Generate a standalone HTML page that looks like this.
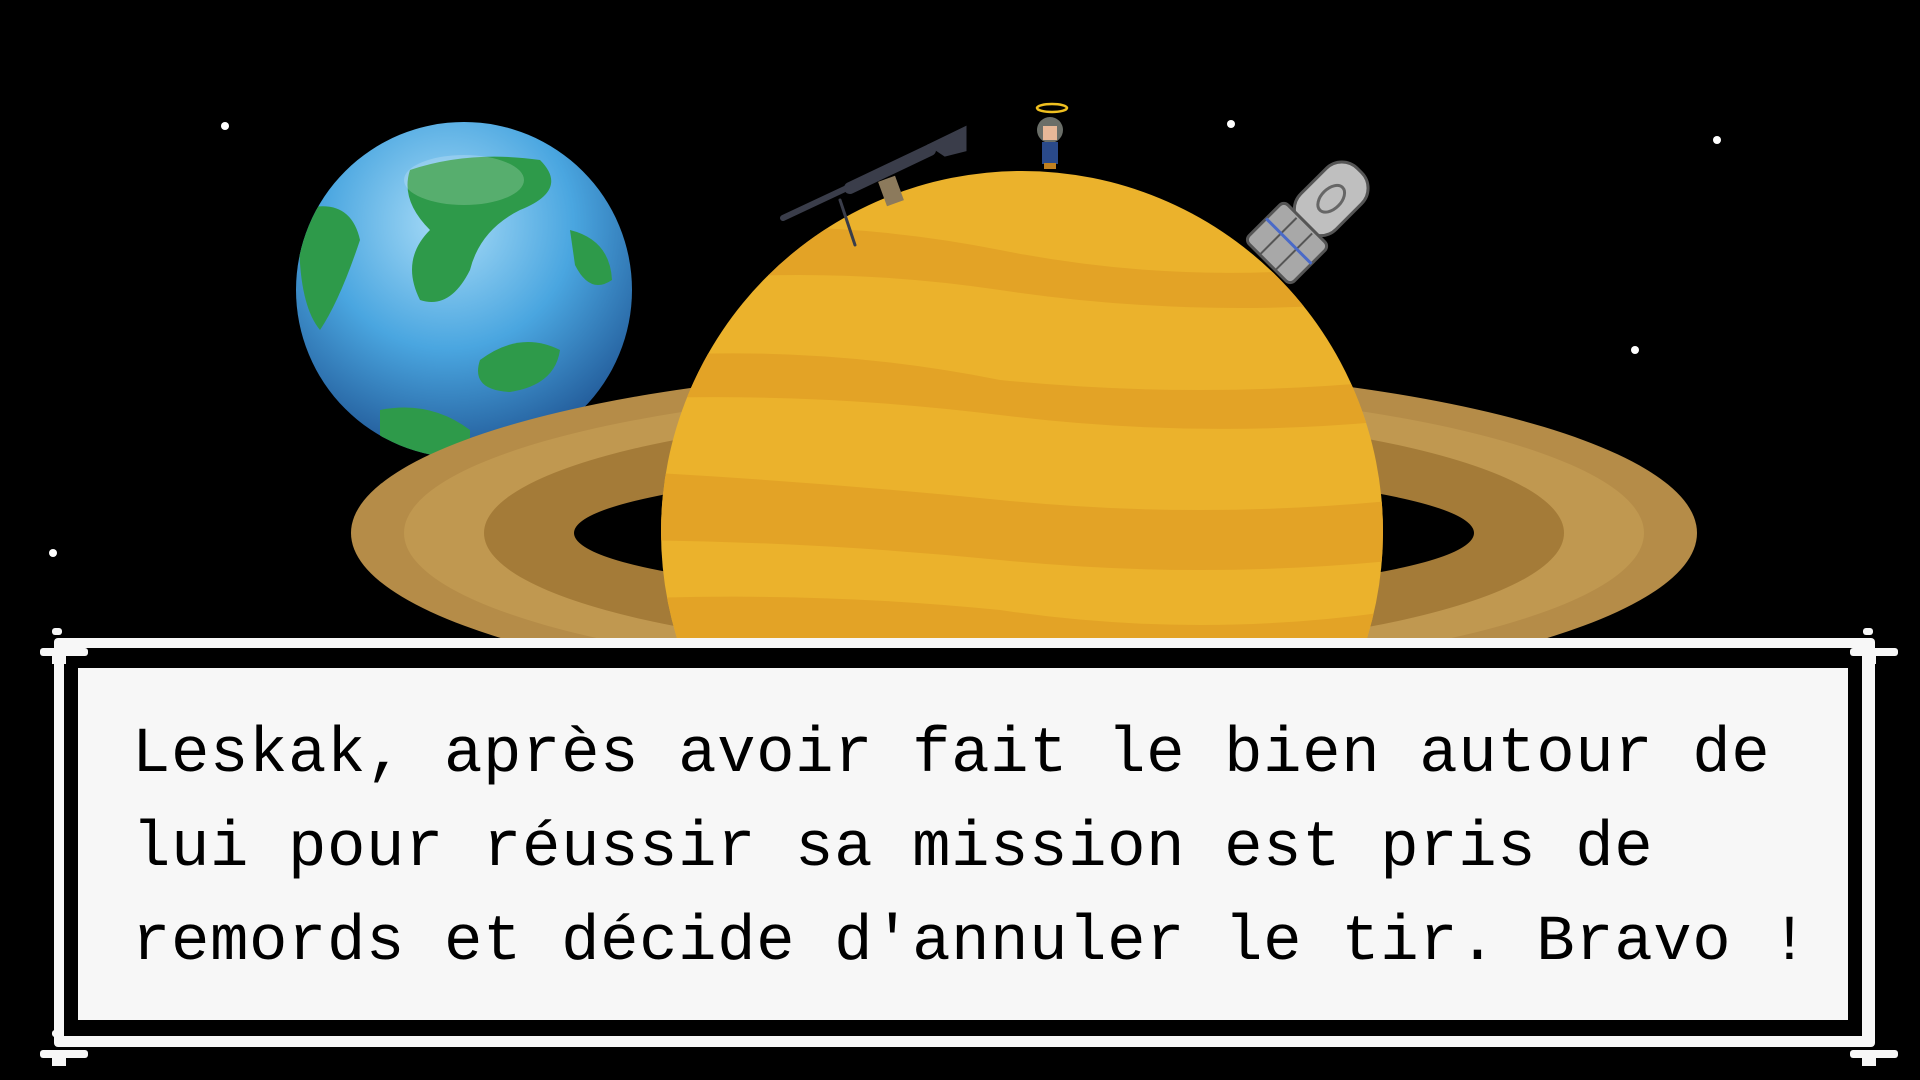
<!DOCTYPE html>
<html><head><meta charset="utf-8"><style>
html,body{margin:0;padding:0;background:#000;width:1920px;height:1080px;overflow:hidden;position:relative}
svg{position:absolute;left:0;top:0}
.f1{position:absolute;left:54px;top:638px;width:1821px;height:409px;background:#f7f7f7;border-radius:4px}
.f2{position:absolute;left:64px;top:648px;width:1798px;height:388px;background:#000}
.f3{position:absolute;left:78px;top:668px;width:1770px;height:352px;background:#f7f7f7}
.t{position:absolute;left:132px;top:708px;font-family:"Liberation Mono",monospace;font-size:64px;line-height:94px;color:#000;white-space:pre;letter-spacing:0.6px}
.orn{position:absolute;background:#f7f7f7}
</style></head><body>
<svg width="1920" height="1080" viewBox="0 0 1920 1080">
<defs>
<radialGradient id="eg" cx="0.45" cy="0.3" r="0.75">
<stop offset="0" stop-color="#a9dcf7"/><stop offset="0.5" stop-color="#4aa6e0"/><stop offset="1" stop-color="#1c4f8e"/></radialGradient>
<clipPath id="sc"><circle cx="1022" cy="532" r="361"/></clipPath>
<clipPath id="ec"><circle cx="464" cy="290" r="168"/></clipPath>
</defs>
<g fill="#fff"><circle cx="225" cy="126" r="4"/><circle cx="1231" cy="124" r="4"/><circle cx="1717" cy="140" r="4"/><circle cx="1635" cy="350" r="4"/><circle cx="53" cy="553" r="4"/></g>
<circle cx="464" cy="290" r="168" fill="url(#eg)"/>
<g clip-path="url(#ec)" fill="#2e9a4a">
<path d="M410 170 Q470 150 540 160 Q570 190 520 210 Q480 230 470 270 Q450 310 420 300 Q400 260 430 230 Q400 200 410 170Z"/>
<path d="M300 210 Q350 195 360 240 Q340 300 320 330 Q295 300 300 210Z"/>
<path d="M570 230 Q610 240 612 280 Q590 295 575 265Z"/>
<path d="M480 360 Q520 330 560 350 Q555 385 510 392 Q470 390 480 360Z"/>
<path d="M380 410 Q430 400 470 430 L470 470 L380 470Z"/>
</g>
<ellipse cx="464" cy="180" rx="60" ry="25" fill="#fff" opacity="0.2"/>
<ellipse cx="1024" cy="533" rx="673" ry="167" fill="#b58c48"/>
<ellipse cx="1024" cy="533" rx="620" ry="145" fill="#c09850"/>
<ellipse cx="1024" cy="533" rx="540" ry="122" fill="#a47b38"/>
<ellipse cx="1024" cy="533" rx="450" ry="64" fill="#000"/>
<circle cx="1022" cy="532" r="361" fill="#ebb22c"/>
<g clip-path="url(#sc)" fill="#e3a326">
<path d="M600 240 Q800 210 1000 250 Q1200 290 1400 260 L1400 300 Q1200 320 1000 290 Q800 260 600 290Z"/>
<path d="M600 360 Q800 340 1000 380 Q1200 400 1400 380 L1400 420 Q1200 440 1000 415 Q800 390 600 400Z"/>
<path d="M600 470 Q800 480 1000 500 Q1200 520 1400 500 L1400 560 Q1200 580 1000 560 Q800 540 600 540Z"/>
<path d="M600 600 Q800 590 1000 610 Q1200 640 1400 610 L1400 700 L600 700Z"/>
</g>
<g stroke="#3a3d4a" stroke-linecap="round">
<line x1="783" y1="218" x2="960" y2="135" stroke-width="6"/>
<line x1="850" y1="188" x2="930" y2="150" stroke-width="12"/>
<line x1="840" y1="200" x2="855" y2="245" stroke-width="3"/>
<path d="M930 145 L965 128 L965 150 L945 155Z" fill="#3a3d4a" stroke-width="3"/>
</g>
<rect x="882" y="178" width="18" height="26" fill="#8c7a5c" transform="rotate(-20 891 191)"/>
<ellipse cx="1052" cy="108" rx="15" ry="4" fill="none" stroke="#f0c020" stroke-width="2.5"/>
<circle cx="1050" cy="130" r="13" fill="#6a6e68"/>
<rect x="1043" y="126" width="14" height="14" fill="#e8b898"/>
<rect x="1042" y="142" width="16" height="22" fill="#2a4a8a"/>
<rect x="1044" y="163" width="12" height="6" fill="#c08020"/>
<g transform="rotate(45 1310 220)">
<rect x="1285" y="150" width="50" height="80" rx="22" fill="#bfbfbf" stroke="#555" stroke-width="3"/>
<rect x="1278" y="225" width="64" height="55" rx="6" fill="#a8a8a8" stroke="#555" stroke-width="3"/>
<line x1="1299" y1="228" x2="1299" y2="280" stroke="#555" stroke-width="2"/>
<line x1="1321" y1="228" x2="1321" y2="280" stroke="#555" stroke-width="2"/>
<line x1="1278" y1="250" x2="1342" y2="250" stroke="#4a6ac8" stroke-width="3"/>
<ellipse cx="1310" cy="190" rx="10" ry="16" fill="none" stroke="#666" stroke-width="3"/>
</g>
</svg>
<div class="f1"></div><div class="f2"></div><div class="f3"></div>
<div class="orn" style="left:52px;top:628px;width:10px;height:7px;border-radius:3px"></div>
<div class="orn" style="left:40px;top:648px;width:48px;height:8px;border-radius:3px"></div>
<div class="orn" style="left:52px;top:656px;width:14px;height:8px"></div>
<div class="orn" style="left:52px;top:1030px;width:10px;height:7px;border-radius:3px"></div>
<div class="orn" style="left:40px;top:1050px;width:48px;height:8px;border-radius:3px"></div>
<div class="orn" style="left:52px;top:1058px;width:14px;height:8px"></div>
<div class="orn" style="left:1863px;top:628px;width:10px;height:7px;border-radius:3px"></div>
<div class="orn" style="left:1850px;top:648px;width:48px;height:8px;border-radius:3px"></div>
<div class="orn" style="left:1862px;top:656px;width:14px;height:8px"></div>
<div class="orn" style="left:1863px;top:1030px;width:10px;height:7px;border-radius:3px"></div>
<div class="orn" style="left:1850px;top:1050px;width:48px;height:8px;border-radius:3px"></div>
<div class="orn" style="left:1862px;top:1058px;width:14px;height:8px"></div>
<div class="t">Leskak, après avoir fait le bien autour de
lui pour réussir sa mission est pris de
remords et décide d'annuler le tir. Bravo !</div>
</body></html>
